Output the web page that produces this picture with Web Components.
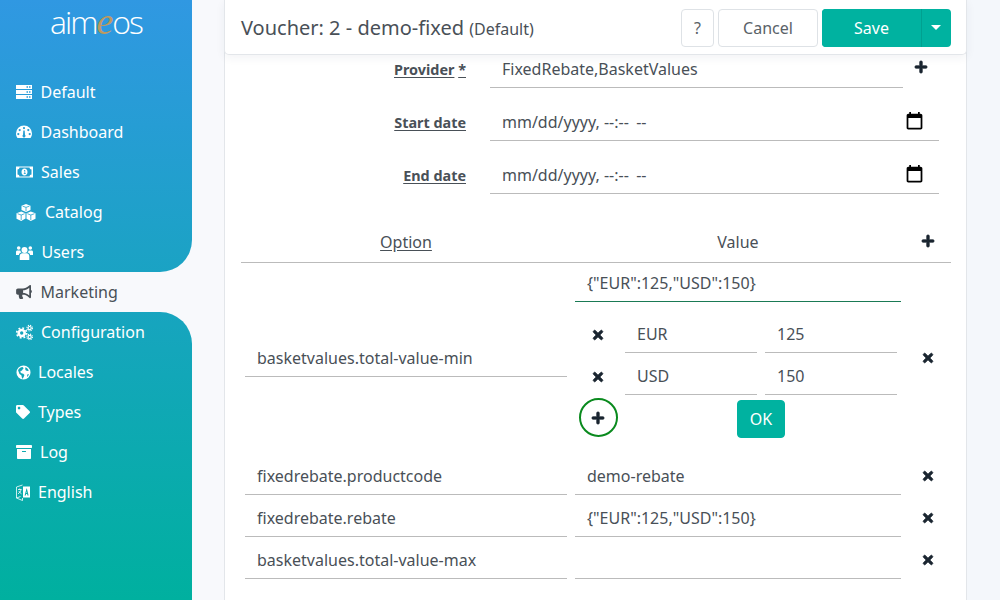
<!DOCTYPE html>
<html><head><meta charset="utf-8">
<style>
html,body{margin:0;height:600px;overflow:hidden;background:#f8f9fc;font-family:"Noto Sans",sans-serif;font-size:16px;color:#495057}
</style></head><body>
<ai-app>
  <ai-sidebar slot="side">
    <ai-navgroup kind="top">
      <ai-logo></ai-logo>
      <ai-nav icon="server" gap="8.5">Default</ai-nav>
      <ai-nav icon="gauge" gap="8.5">Dashboard</ai-nav>
      <ai-nav icon="money" gap="8">Sales</ai-nav>
      <ai-nav icon="cubes" gap="9">Catalog</ai-nav>
      <ai-nav icon="users" gap="8.5">Users</ai-nav>
    </ai-navgroup>
    <ai-nav icon="bullhorn" gap="8.500" active>Marketing</ai-nav>
    <ai-navgroup kind="bottom">
      <ai-nav icon="cogs" gap="8">Configuration</ai-nav>
      <ai-nav icon="globe" gap="7">Locales</ai-nav>
      <ai-nav icon="tag" gap="8">Types</ai-nav>
      <ai-nav icon="archive" gap="8">Log</ai-nav>
      <ai-nav icon="language" gap="8">English</ai-nav>
    </ai-navgroup>
  </ai-sidebar>
  <ai-card>
    <ai-header slot="head"></ai-header>
    <ai-field label="Provider|*" action="plus">FixedRebate,BasketValues</ai-field>
    <ai-field label="Start date" date>mm/dd/yyyy, --:--&#8202;&#8202; --</ai-field>
    <ai-field label="End date" date>mm/dd/yyyy, --:--&#8202;&#8202; --</ai-field>
    <ai-config></ai-config>
  </ai-card>
</ai-app>
<script>
const P={
plus:['0 0 448 512','<path stroke="currentColor" stroke-width="26" d="M416 208H272V64c0-17.67-14.33-32-32-32h-32c-17.67 0-32 14.33-32 32v144H32c-17.67 0-32 14.33-32 32v32c0 17.67 14.33 32 32 32h144v144c0 17.67 14.33 32 32 32h32c17.67 0 32-14.33 32-32V304h144c17.67 0 32-14.33 32-32v-32c0-17.67-14.33-32-32-32z"/>'],
times:['0 0 352 512','<path stroke="currentColor" stroke-width="30" d="M242.72 256l100.07-100.07c12.28-12.28 12.28-32.19 0-44.48l-22.24-22.24c-12.28-12.28-32.19-12.28-44.48 0L176 189.28 75.93 89.21c-12.28-12.28-32.19-12.28-44.48 0L9.21 111.45c-12.28 12.28-12.28 32.19 0 44.48L109.28 256 9.21 356.07c-12.28 12.28-12.28 32.19 0 44.48l22.24 22.24c12.28 12.28 32.2 12.28 44.48 0L176 322.72l100.07 100.07c12.28 12.28 32.2 12.28 44.48 0l22.24-22.24c12.28-12.28 12.28-32.19 0-44.48L242.72 256z"/>'],
server:['0 0 16 16','<path fill-rule="evenodd" d="M0 1h16v4H0zM10.5 2.2v1.6h1.5V2.200zM13 2.200v1.600h1.500V2.200zM0 6h16v4H0zM10.500 7.200v1.600h1.500V7.200zM13 7.200v1.600h1.500V7.200zM0 11h16v4H0zM10.500 12.200v1.600h1.500v-1.600zM13 12.200v1.600h1.500v-1.600z"/>'],
gauge:['0 0 16 16','<path fill-rule="evenodd" d="M8 1.500A8 8 0 0 0 0 9.500c0 1.600.5 3.100 1.300 4.300.2.200.4.200.6.200h12.200c.2 0 .4 0 .6-.2.8-1.200 1.300-2.700 1.300-4.300a8 8 0 0 0-8-8zM8 3a1.100 1.100 0 1 1 0 2.200A1.100 1.100 0 0 1 8 3zM3.700 5a1.100 1.100 0 1 1 0 2.200 1.100 1.100 0 0 1 0-2.200zM2.300 9a1.100 1.100 0 1 1 0 2.200 1.100 1.100 0 0 1 0-2.200zM12.300 5a1.100 1.100 0 1 1 0 2.200 1.100 1.100 0 0 1 0-2.200zM13.700 9a1.100 1.100 0 1 1 0 2.200 1.100 1.100 0 0 1 0-2.200zM7.300 6.500h1.400l.3 4.300a1.500 1.500 0 1 1-2 0z"/>'],
money:['0 0 17 12','<path fill-rule="evenodd" d="M0 .5h17v11H0zM1.500 3.500v5a2 2 0 0 1 2 2h10a2 2 0 0 1 2-2v-5a2 2 0 0 1-2-2h-10a2 2 0 0 1-2 2zM8.500 2.500c1.700 0 3 1.500 3 3.500s-1.300 3.500-3 3.500-3-1.500-3-3.500 1.300-3.500 3-3.500zM8 4v.8h.5v2.500H7.800v.7h2v-.7h-.6V4z"/>'],
cubes:['0 0 20 17','<path d="M10 0l4.500 1.700v4.400L10 7.900 5.500 6.100V1.700zM5.200 7.600l4.300 1.600v5.200L5.200 17 .5 14.800V9.200zM14.800 7.600l4.700 1.600v5.600L14.800 17l-4.300-2.200V9.200z"/><path d="M5.200 11l3.400-1.300M5.200 11L1.500 9.700M5.200 11v5M14.800 11l3.700-1.300M14.800 11l-3.400-1.300M14.800 11v5M10 3.400l3.400-1.300M10 3.400L6.600 2.100M10 3.400v3.600" fill="none" stroke="#22a2cc" stroke-width=".8"/>'],
users:['0 0 17 15','<circle cx="8.500" cy="5" r="3"/><circle cx="2.700" cy="3" r="1.800"/><circle cx="14.300" cy="3" r="1.800"/><path d="M3.700 15v-3.700c0-2 1.300-3 2.600-3h4.400c1.300 0 2.600 1 2.600 3V15zM0 10V7c0-1.200.9-1.600 1.700-1.600h2.500c.3.900.9 1.700 1.300 2.100-1.300.3-2.500 1.200-2.600 2.500zM17 10V7c0-1.200-.9-1.600-1.700-1.600h-2.500c-.3.900-.9 1.700-1.300 2.100 1.300.3 2.500 1.200 2.600 2.500z"/>'],
bullhorn:['0 0 576 512','<path d="M576 240c0-23.630-12.950-44.040-32-55.120V32.010C544 23.260 537.020 0 512 0c-7.120 0-14.190 2.380-19.980 7.020l-85.030 68.030C364.280 109.190 310.660 128 256 128H64c-35.350 0-64 28.650-64 64v96c0 35.350 28.650 64 64 64h33.700c-1.390 10.480-2.180 21.140-2.180 32 0 39.770 9.260 77.350 25.560 110.940 5.190 10.690 16.520 17.060 28.400 17.060h74.280c26.050 0 41.690-29.840 25.900-50.560-16.400-21.520-26.150-48.360-26.150-77.440 0-11.110 1.620-21.790 4.410-32H256c54.660 0 108.280 18.810 150.980 52.950l85.030 68.030a32.023 32.023 0 0 0 19.980 7.020c24.920 0 32-22.770 32-32V295.130C563.050 284.040 576 263.630 576 240zm-96 141.420l-33.050-26.440C392.950 311.780 325.120 288 256 288v-96c69.120 0 136.950-23.780 190.950-66.980L480 98.580v282.840z"/>'],
cogs:['0 0 18 16','<g fill="none" stroke="#fff"><circle cx="6" cy="8.500" r="3.200" stroke-width="2.800"/><circle cx="6" cy="8.500" r="5.300" stroke-width="1.800" stroke-dasharray="2 2.160"/><circle cx="14.500" cy="3.300" r="1.700" stroke-width="1.300"/><circle cx="14.500" cy="3.300" r="3" stroke-width="1.100" stroke-dasharray="1.300 1.060"/><circle cx="14.500" cy="12.700" r="1.700" stroke-width="1.300"/><circle cx="14.500" cy="12.700" r="3" stroke-width="1.100" stroke-dasharray="1.300 1.060"/></g>'],
globe:['0 0 16 16','<path fill-rule="evenodd" d="M8 .5a7.500 7.500 0 1 0 0 15 7.500 7.500 0 0 0 0-15zM2.200 5.500C3 3.700 5 2.400 7 2.200l1.200 1.300-1 1-1 1.500-1 .2-.7 1.200 1.300 1.500 2 .3 1.200 1.500-.7 1.800-1 1.800H6.500L5.700 11 3.700 9.500zM10 2.500c1.700.6 3 1.900 3.600 3.500l-1.300.5-1.800-.6-.7-1.400zM12 10l1.800-.5c-.3 1.300-1 2.500-2 3.300z"/>'],
tag:['0 0 512 512','<path fill-rule="evenodd" d="M0 252.118V48C0 21.49 21.49 0 48 0h204.118a48 48 0 0 1 33.941 14.059l211.882 211.882c18.745 18.745 18.745 49.137 0 67.882L293.823 497.941c-18.745 18.745-49.137 18.745-67.882 0L14.059 286.059A48 48 0 0 1 0 252.118zM112 64c-26.51 0-48 21.49-48 48s21.49 48 48 48 48-21.490 48-48-21.490-48-48-48z"/>'],
archive:['0 0 512 512','<path fill-rule="evenodd" d="M32 448c0 17.700 14.300 32 32 32h384c17.700 0 32-14.300 32-32V160H32v288zm160-212c0-6.600 5.400-12 12-12h104c6.600 0 12 5.400 12 12v8c0 6.600-5.400 12-12 12H204c-6.600 0-12-5.400-12-12v-8zM480 32H32C14.300 32 0 46.300 0 64v48c0 8.800 7.200 16 16 16h480c8.800 0 16-7.200 16-16V64c0-17.700-14.300-32-32-32z"/>'],
language:['0 0 14 17','<path fill-rule="evenodd" d="M7 2.500h7v11H7zM10.500 4.500L8.600 11.500h1.100l.4-1.500h1l.4 1.500h1.100L10.900 4.500zM10.300 9l.3-1.800.3 1.800z"/><path d="M6.500 1L.5 3v11l4 -1.500 M.5 14l6 2.500V14M2 5.500h3.500M3.700 4.500v1M5 5.500c-.3 2-1.500 3.500-3 4.300M2.800 7c.6 1.200 1.500 2 2.700 2.800" fill="none" stroke="#fff" stroke-width=".8"/>'],
cal:['0 0 24 24','<path d="M19 3h-1V1h-2v2H8V1H6v2H5c-1.110 0-2 .9-2 2v14c0 1.100.89 2 2 2h14c1.100 0 2-.9 2-2V5c0-1.100-.9-2-2-2zm0 16H5V8h14v11z"/>']
};
const svg=(n,w,h,f)=>`<svg xmlns="http://www.w3.org/2000/svg" width="${w}" height="${h}" viewBox="${P[n][0]}" fill="${f||'currentColor'}" style="display:block;flex:none;overflow:visible">${P[n][1]}</svg>`;
const def=(name,html)=>customElements.define(name,class extends HTMLElement{
  constructor(){super();this.attachShadow({mode:'open'}).innerHTML=typeof html==='function'?html(this):html;}
});
const sizes={server:[16,16],gauge:[16,16],money:[17,12],cubes:[20,17],users:[17,15],bullhorn:[16,14],cogs:[17,15],globe:[15,15],tag:[14,14],archive:[16,16],language:[14,17]};

def('ai-app',`<style>:host{display:flex;height:600px;overflow:hidden}
.m{flex:none;width:743px;margin-left:32px}
.bg{flex:1;background:#f4f7fb}
</style><slot name="side"></slot><div class="m"><slot></slot></div><div class="bg"></div>`);

def('ai-sidebar',`<style>:host{display:flex;flex-direction:column;flex:none;width:192px;height:600px}</style><slot></slot>`);

def('ai-navgroup',`<style>:host{display:block;background:linear-gradient(180deg,#3098e2 0,#00b09f 600px) fixed}
:host([kind=top]){border-bottom-right-radius:32px}
:host([kind=bottom]){border-top-right-radius:32px;flex:1}
</style><slot></slot>`);

def('ai-logo',`<style>:host{display:block;height:72px;box-sizing:border-box;padding-top:1px;text-align:center;color:#fff;font-size:32px;font-weight:300;line-height:40px;letter-spacing:-2px;font-family:"Open Sans",sans-serif}
i{font-family:"Liberation Serif",serif;color:#bd9a60;font-size:38px;letter-spacing:-1px}
</style>aim<i>e</i>os`);

customElements.define('ai-nav',class extends HTMLElement{
  constructor(){super();
    const i=this.getAttribute('icon'),g=this.getAttribute('gap'),[w,h]=sizes[i];
    this.attachShadow({mode:'open'}).innerHTML=`<style>
    :host{display:flex;align-items:center;height:40px;box-sizing:border-box;padding-left:16px;color:#fff;font-size:16px}
    :host([active]){color:#495057;flex:none}
    .t{margin-left:${g}px}
    </style>${svg(i,w,h)}<span class="t"><slot></slot></span>`;
  }
});

def('ai-btn',`<style>:host{display:flex;align-items:center;justify-content:center;box-sizing:border-box;height:38px;border-radius:4px;border:1px solid #dee2e6;background:#fff;color:#5a6268;font-size:16px}
:host([primary]){background:#00b2a0;border-color:#00b2a0;color:#fff}
</style><slot></slot>`);

def('ai-header',`<style>:host{display:flex;align-items:center;height:55px;box-sizing:border-box;padding:1px 15px 0 16px;margin:0 -1px;background:#fff;border:1px solid #e3e6ea;border-top:0;border-radius:0 0 5px 5px;box-shadow:0 3px 10px rgba(30,50,90,.06);position:relative;z-index:2;color:#495057}
h1{margin:0;flex:1;font-weight:400;font-size:20px;white-space:nowrap}
small{font-size:16px}
.b{display:flex;gap:4px;}
.s{display:flex;border-radius:4px;overflow:hidden}
.d{width:30px;height:38px;padding-right:1px;background:#00b2a0;border-left:1px solid #00a090;box-sizing:border-box;display:flex;align-items:center;justify-content:center}
.d b{border:5px solid transparent;border-top-color:#fff;border-bottom:0;display:block}
</style><h1>Voucher: 2 - demo-fixed <small>(Default)</small></h1>
<div class="b"><ai-btn style="width:33px">?</ai-btn><ai-btn style="width:100px">Cancel</ai-btn>
<div class="s"><ai-btn primary style="width:99px;border-radius:0">Save</ai-btn><div class="d"><b></b></div></div></div>`);

def('ai-card',`<style>:host{display:block;height:600px;box-sizing:border-box;background:#fff;border:solid #e3e6ea;border-width:0 1px;}
.c{padding:0 15px 0 16px;margin-top:-20px}
</style><slot name="head"></slot><div class="c"><slot></slot></div>`);

def('ai-input',`<style>:host{display:flex;align-items:center;justify-content:space-between;box-sizing:border-box;height:var(--h,38px);padding:0 12px;border-bottom:1px solid #bbb;font-size:16px;color:#495057;white-space:nowrap}
:host([focus]){border-bottom-color:#1a7a55}
</style><span><slot></slot></span><slot name="end"></slot>`);

customElements.define('ai-field',class extends HTMLElement{
  constructor(){super();
    const d=this.hasAttribute('date'),a=this.getAttribute('action');
    const lab=this.getAttribute('label').split('|').map(s=>`<u>${s}</u>`).join(' ');
    this.attachShadow({mode:'open'}).innerHTML=`<style>
    :host{display:grid;grid-template-columns:225px 1fr;column-gap:24px;height:53px;align-items:end;margin-right:12px}
    label{justify-self:end;font-weight:700;font-size:14.4px;line-height:20px;padding-bottom:8px}
    u{text-underline-offset:2px}
    .w{display:flex;align-items:center}
    ai-input{flex:1}
    .a{flex:none;width:36px;display:flex;justify-content:center;color:#1a2530;padding-bottom:5px}
    .cal{color:#000;display:block;margin-right:2px;margin-top:-1px}
    </style><label>${lab}</label>
    <div class="w"><ai-input><slot></slot>${d?`<span slot="end" class="cal">${svg('cal',21,21)}</span>`:''}</ai-input>
    ${a?`<div class="a">${svg(a,12,14)}</div>`:''}</div>`;
  }
});

def('ai-x',`<style>:host{display:flex;align-items:center;justify-content:center;color:#1a2530}</style>`+svg('times',10,14));

def('ai-config',`<style>
:host{display:block;margin-top:28px}
.row{display:grid;grid-template-columns:330px 334px 46px}
.h{height:40px;align-items:center;border-bottom:1px solid #bbb;text-align:center;font-size:16px}
.h u{text-underline-offset:2px}
.p{display:flex;justify-content:center;color:#1a2530;margin-top:-2px}
.k{padding:0 4px;align-self:center}
.v{padding:0 4px}
.r{height:42px;align-items:end}
.r .k{align-self:end}
.r ai-x{align-self:end;height:38px}
.big{height:190px;align-items:center}
.big .v{align-self:start;padding-top:1px}
.sr{display:grid;grid-template-columns:42px 132px 132px;column-gap:8px;height:42px;align-items:end}
.sr ai-x{padding-left:4px;height:37px}
.foot{display:grid;grid-template-columns:46px 1fr;align-items:center;height:45px}
.add{width:39px;height:39px;box-sizing:border-box;border:2px solid #0a8a1e;border-radius:50%;display:flex;align-items:center;justify-content:center;color:#1a2530;margin-left:4px;padding-right:1px}
.ok{width:48px;margin-left:116px;height:38px;align-self:start;margin-top:5px}
</style>
<div class="row h"><span><u>Option</u></span><span>Value</span><span class="p">${svg('plus',12,14)}</span></div>
<div class="row big">
 <div class="k"><ai-input>basketvalues.total-value-min</ai-input></div>
 <div class="v"><ai-input focus>{"EUR":125,"USD":150}</ai-input>
  <div style="height:9px"></div>
  <div class="sr"><ai-x></ai-x><ai-input>EUR</ai-input><ai-input>125</ai-input></div>
  <div class="sr"><ai-x></ai-x><ai-input>USD</ai-input><ai-input>150</ai-input></div>
  <div class="foot"><div class="add">${svg('plus',12,14)}</div><ai-btn primary class="ok">OK</ai-btn></div>
 </div>
 <ai-x></ai-x>
</div>
<div class="row r"><div class="k"><ai-input>fixedrebate.productcode</ai-input></div><div class="v"><ai-input>demo-rebate</ai-input></div><ai-x></ai-x></div>
<div class="row r"><div class="k"><ai-input>fixedrebate.rebate</ai-input></div><div class="v"><ai-input>{"EUR":125,"USD":150}</ai-input></div><ai-x></ai-x></div>
<div class="row r"><div class="k"><ai-input>basketvalues.total-value-max</ai-input></div><div class="v"><ai-input></ai-input></div><ai-x></ai-x></div>`);
</script>
</body></html>
